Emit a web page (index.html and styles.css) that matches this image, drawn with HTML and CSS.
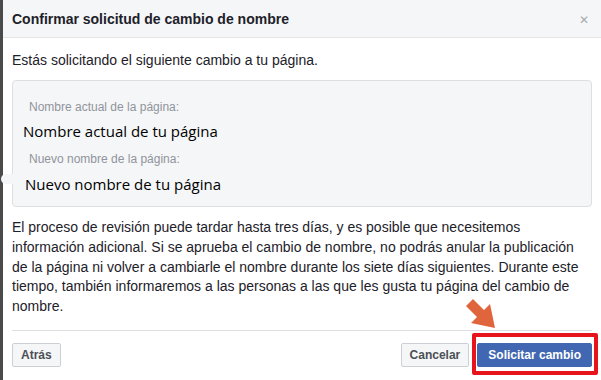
FILE: index.html
```html
<!DOCTYPE html>
<html lang="es">
<head>
  <meta charset="UTF-8" />
  <title>Confirmar solicitud de cambio de nombre</title>
  <link rel="stylesheet" href="styles.css">
</head>
<body>
  <div class="dialog">
    <div class="dialog-header">
      <h2 class="dialog-title">Confirmar solicitud de cambio de nombre</h2>
      <span class="close">&#x2715;</span>
    </div>

    <div class="dialog-body">
      <p class="intro">Estás solicitando el siguiente cambio a tu página.</p>

      <div class="names">
        <span class="tab"></span>
        <div class="name-label">Nombre actual de la página:</div>
        <div class="name-value">Nombre actual de tu página</div>
        <div class="name-label">Nuevo nombre de la página:</div>
        <div class="name-value new">Nuevo nombre de tu página</div>
      </div>

      <p class="notice">El proceso de revisión puede tardar hasta tres días, y es posible que necesitemos información adicional. Si se aprueba el cambio de nombre, no podrás anular la publicación de la página ni volver a cambiarle el nombre durante los siete días siguientes. Durante este tiempo, también informaremos a las personas a las que les gusta tu página del cambio de nombre.</p>
    </div>

    <div class="dialog-footer">
      <button class="btn">Atrás</button>
      <div class="actions">
        <button class="btn">Cancelar</button>
        <button class="btn primary">Solicitar cambio</button>
      </div>
    </div>

    <!-- annotation -->
    <svg class="arrow" width="36" height="36" viewBox="0 0 36 36">
      <path d="M3 10 L10 3 L21 14 L27 8 L32 32 L8 27 L14 21 Z" fill="#e0643c"/>
    </svg>
    <div class="highlight"></div>
  </div>
</body>
</html>
```

FILE: styles.css
```css
body {
  margin: 0;
  font-family: "Liberation Sans", Arial, sans-serif;
  color: #1d2129;
  background: #fff;
}
.dialog {
  position: relative;
  width: 598px;
  height: 380px;
  border-left: 3px solid #4a4a4a;
  background: #fff;
}
.dialog-header {
  display: flex;
  align-items: center;
  justify-content: space-between;
  height: 37px;
  padding: 0 12px 0 9px;
  background: #f5f6f7;
  border-bottom: 1px solid #e5e5e5;
}
.dialog-title {
  margin: 0;
  font-size: 14px;
  font-weight: bold;
  color: #1d2129;
}
.close {
  font-size: 12px;
  color: #a8abb0;
  margin-top: 2px;
}
.dialog-body {
  padding: 0 9px;
}
.intro {
  margin: 13px 0 11px;
  font-size: 14px;
  line-height: 18px;
  color: #1d2129;
}
.names {
  position: relative;
  padding: 18px 0 12px 13px;
  background: #f5f6f7;
  border: 1px solid #dddfe2;
  border-radius: 4px;
}
.tab {
  position: absolute;
  left: -12px;
  top: 93px;
  width: 16px;
  height: 10px;
  border-radius: 5px;
  background: #f5f6f7;
}
.name-label {
  margin-left: 3px;
  font-size: 12px;
  line-height: 16px;
  color: #90949c;
}
.name-value {
  margin: 6px 0 10px -3px;
  font-family: "Open Sans", sans-serif;
  font-size: 15px;
  line-height: 20px;
  color: #000;
}
.name-value.new {
  margin: 7px 0 0 -1px;
}
.notice {
  margin: 11px 0 0;
  font-size: 14px;
  line-height: 19.8px;
  color: #1d2129;
}
.dialog-footer {
  display: flex;
  justify-content: space-between;
  align-items: center;
  margin: 13px 9px 0;
  padding-top: 12px;
  border-top: 1px solid #dddfe2;
}
.actions {
  display: flex;
  gap: 8px;
}
.btn {
  height: 24px;
  padding: 0 8px;
  font-family: "Liberation Sans", Arial, sans-serif;
  font-size: 12px;
  font-weight: bold;
  color: #4b4f56;
  background: #f5f6f7;
  border: 1px solid #ccd0d5;
  border-radius: 2px;
}
.btn.primary {
  padding: 0 10px;
  color: #fff;
  background: #4267b2;
  border-color: #4267b2;
}
.arrow {
  position: absolute;
  left: 460px;
  top: 296px;
}
.highlight {
  position: absolute;
  left: 469px;
  top: 333px;
  width: 118px;
  height: 34px;
  border: 4px solid #e8141c;
  border-radius: 2px;
}
```
